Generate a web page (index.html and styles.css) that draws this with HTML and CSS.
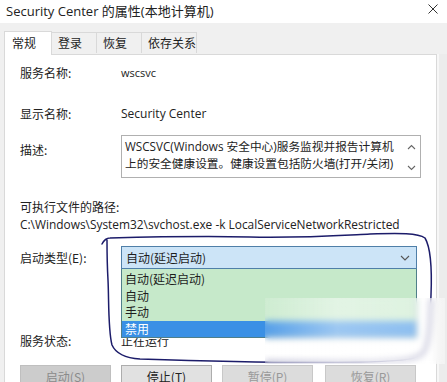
FILE: index.html
```html
<!DOCTYPE html>
<html lang="zh-CN">
<head>
<meta charset="utf-8">
<link rel="stylesheet" href="styles.css">
</head>
<body>
<div class="window">
  <div class="titlebar">
    <span class="title">Security Center 的属性(本地计算机)</span>
    <svg class="close" width="10" height="10" viewBox="0 0 10 10"><path d="M0.5 0.5L9.5 9.5M9.5 0.5L0.5 9.5" stroke="#333" stroke-width="1"/></svg>
  </div>
  <div class="tabs">
    <div class="tab active">常规</div>
    <div class="tab t2">登录</div>
    <div class="tab t3">恢复</div>
    <div class="tab t4">依存关系</div>
  </div>
  <div class="body">
    <div class="panel">
      <div class="row r1"><span class="label">服务名称:</span><span class="value small">wscsvc</span></div>
      <div class="row r2"><span class="label">显示名称:</span><span class="value">Security Center</span></div>
      <div class="row r3"><span class="label desc-label">描述:</span>
        <div class="desc">
          <div class="desc-text">WSCSVC(Windows 安全中心)服务监视并报告计算机上的安全健康设置。健康设置包括防火墙(打开/关闭)</div>
          <div class="scroll">
            <svg width="9" height="6" viewBox="0 0 9 6"><path d="M1 5L4.5 1.5L8 5" fill="none" stroke="#666" stroke-width="1.1"/></svg>
            <svg width="9" height="6" viewBox="0 0 9 6"><path d="M1 1L4.5 4.5L8 1" fill="none" stroke="#666" stroke-width="1.1"/></svg>
          </div>
        </div>
      </div>
      <div class="row r4"><span class="label">可执行文件的路径:</span></div>
      <div class="row r5"><span class="path">C:\Windows\System32\svchost.exe -k LocalServiceNetworkRestricted</span></div>
      <div class="row r6"><span class="label">启动类型(E):</span>
        <div class="combo">
          <span>自动(延迟启动)</span>
          <svg width="10" height="6" viewBox="0 0 10 6"><path d="M1 1L5 5L9 1" fill="none" stroke="#555" stroke-width="1.1"/></svg>
          <ul class="list">
            <li>自动(延迟启动)</li>
            <li>自动</li>
            <li>手动</li>
            <li class="sel">禁用</li>
          </ul>
        </div>
      </div>
      <div class="sep"></div>
      <div class="row r7"><span class="label">服务状态:</span><span class="value">正在运行</span></div>
      <div class="buttons">
        <div class="btn disabled">启动(S)</div>
        <div class="btn">停止(T)</div>
        <div class="btn disabled">暂停(P)</div>
        <div class="btn disabled">恢复(R)</div>
      </div>
    </div>
    <div class="side"></div>
  </div>
  <svg class="ink" width="447" height="382" viewBox="0 0 447 382">
    <path d="M102 244 C104 240 106 238 110 238 C150 237 200 236 250 237 C300 238 330 236 370 234 C400 233 418 233 425 238 C431 248 432 270 431 295 C430 320 430 340 424 352 C418 360 400 361 360 362 C300 363 200 361 140 359 C125 358 116 354 112 345 C108 330 109 300 108 280 C107 262 107 248 107 240" fill="none" stroke="#1c1c6a" stroke-width="1.5" stroke-linecap="round"/>
  </svg>
  <div class="blur"></div>
</div>
</body>
</html>
```
FILE: styles.css
```css
* { box-sizing: border-box; }
html, body { margin: 0; padding: 0; }
body {
  width: 447px;
  height: 382px;
  overflow: hidden;
  background: #f0f0f0;
  font-family: "Open Sans", "Noto Sans CJK SC", sans-serif;
  font-size: 12px;
  color: #1e1e1e;
}
.window { position: relative; width: 447px; height: 382px; }
.titlebar {
  height: 23px;
  background: #fff;
  display: flex;
  align-items: center;
  justify-content: space-between;
  padding: 0 9px 2px 6px;
}
.title { font-size: 13px; color: #222; }
.close { margin-top: -3px; }
.tabs {
  height: 31px;
  display: flex;
  align-items: flex-end;
  padding-left: 4px;
  position: relative;
  z-index: 1;
}
.tab {
  height: 21px;
  margin-bottom: 1px;
  border: 1px solid #d9d9d9;
  border-bottom: none;
  border-left: none;
  background: #f0f0f0;
  font-family: "Noto Sans CJK SC", sans-serif;
  font-size: 12px;
  line-height: 19px;
  padding-left: 6px;
}
.tab.active {
  width: 48px;
  height: 24px;
  margin-bottom: -1px;
  background: #fff;
  border-left: 1px solid #d9d9d9;
  padding-left: 7px;
  line-height: 22px;
}
.t2 { width: 45px; }
.t3 { width: 45px; }
.t4 { width: 55px; }
.body { display: flex; height: 328px; }
.panel {
  margin-left: 4px;
  width: 433px;
  background: #fff;
  border: 1px solid #d9d9d9;
  border-bottom: none;
  padding-left: 15px;
  display: flex;
  flex-direction: column;
}
.side {
  width: 10px;
  margin-left: 0;
  background: #ececec;
  border-left: 2px solid #f7f7f7;
}
.row { display: flex; align-items: center; height: 16px; }
.label {
  width: 101px;
  flex: none;
  font-family: "Noto Sans CJK SC", sans-serif;
  font-size: 12px;
  color: #222;
}
.value { font-size: 12px; color: #222; }
.value.small { font-size: 11px; }
.r7 .value { font-family: "Noto Sans CJK SC", sans-serif; }
.r1 { margin-top: 9px; }
.r2 { margin-top: 25px; }
.r3 { margin-top: 14px; height: 43px; align-items: flex-start; }
.desc-label { padding-top: 6px; }
.desc {
  width: 300px;
  height: 43px;
  border: 1px solid #b0b0b0;
  display: flex;
  padding: 2px 0 0 3px;
}
.desc-text {
  width: 278px;
  font-size: 11.7px;
  line-height: 17px;
  color: #222;
  font-family: "Open Sans", "Noto Sans CJK SC", sans-serif;
}
.scroll {
  flex: 1;
  display: flex;
  flex-direction: column;
  justify-content: space-between;
  align-items: center;
  padding: 6px 0 6px;
}
.r4 { margin-top: 20px; }
.r5 { margin-top: 2px; }
.path { font-size: 11.9px; color: #222; letter-spacing: 0; white-space: nowrap; }
.r6 { margin-top: 14px; height: 23px; }
.combo {
  position: relative;
  width: 296px;
  height: 23px;
  background: #cce4f7;
  border: 1px solid #4f7fa8;
  display: flex;
  align-items: center;
  justify-content: space-between;
  padding: 0 6px 0 4px;
  font-family: "Noto Sans CJK SC", sans-serif;
}
.list {
  position: absolute;
  left: -1px;
  top: 22px;
  width: 296px;
  margin: 0;
  padding: 2px 0 0;
  list-style: none;
  background: #c6e9ca;
  border: 1px solid #4f7f8a;
  border-top: none;
  z-index: 2;
}
.list li {
  height: 16.5px;
  line-height: 16.5px;
  padding-left: 3px;
  font-family: "Noto Sans CJK SC", sans-serif;
  font-size: 12px;
  color: #1e1e1e;
}
.list li.sel { background: #3a90e5; color: #fff; }
.sep { margin-top: 48px; width: 396px; height: 1px; background: #a0a0a0; }
.r7 { margin-top: 15px; }
.buttons { margin-top: 17px; display: flex; gap: 10px; }
.btn {
  width: 91px;
  height: 23px;
  background: #e1e1e1;
  border: 1px solid #adadad;
  text-align: center;
  line-height: 21px;
  font-family: "Noto Sans CJK SC", sans-serif;
  font-size: 12px;
  color: #222;
}
.btn.disabled { background: #cccccc; border-color: #bfbfbf; color: #8a8a8a; }
.btn:nth-child(3), .btn:nth-child(4) { background: #dcdcdc; border-color: #c8c8c8; color: #999; }
.btn:nth-child(4) { margin-left: 2px; }
.ink { position: absolute; left: 0; top: 0; pointer-events: none; z-index: 3; }
.blur {
  position: absolute;
  left: 265px;
  top: 298px;
  width: 180px;
  height: 66px;
  background: linear-gradient(90deg, rgba(255,255,255,0.15), rgba(255,255,255,0.5) 40%, rgba(255,255,255,0.4));
  backdrop-filter: blur(3px);
  z-index: 4;
}
```
